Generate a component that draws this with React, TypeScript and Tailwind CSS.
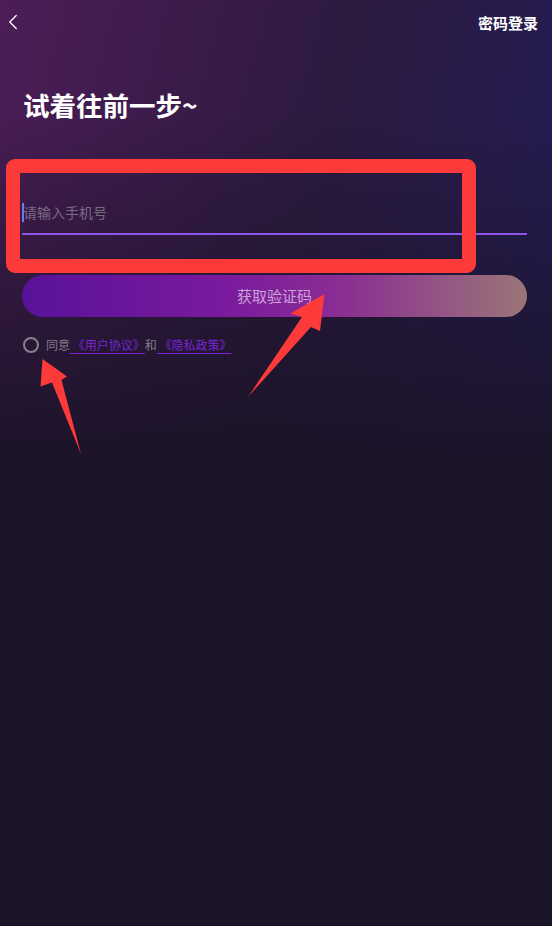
import { ChevronLeft } from "lucide-react";

const font = "font-['Noto_Sans_CJK_SC','Noto_Sans',sans-serif]";

// red markup drawn over the screenshot (box + two arrows)
function Annotations() {
  return (
    <>
      <div className="absolute left-[6px] top-[159px] w-[470px] h-[114px] border-[14px] border-[#fd3a3a] rounded-[9px] pointer-events-none" />
      <svg className="absolute left-0 top-0 pointer-events-none" width="552" height="926" viewBox="0 0 552 926">
        <polygon points="42.5,359 67,376.5 61.5,380 81,454 52,382.5 40.5,386.5" fill="#fd3a3a" />
        <polygon points="324.5,294 320,331 311,327 248,397 302,317 290.5,313.5" fill="#fd3a3a" />
      </svg>
    </>
  );
}

export default function App() {
  return (
    <div
      className={`relative w-[552px] h-[926px] overflow-hidden bg-[#1b1327] bg-[image:linear-gradient(180deg,rgba(27,19,39,0)_0px,rgba(27,19,39,0)_110px,#1b1327_470px),linear-gradient(105deg,#4c1d57_0%,#2c1a3f_45%,#231c55_80%,#221c5c_100%)] ${font}`}
    >
      {/* ── Top bar ─────────────────────────── */}
      <div className="h-[44px] flex items-center justify-between pr-[14px]">
        <ChevronLeft className="w-[26px] h-[26px] text-white" strokeWidth={1.2} />
        <span className="text-[15px] font-bold text-white leading-none">密码登录</span>
      </div>

      {/* ── Title ───────────────────────────── */}
      <h1 className="mt-[43px] pl-[23px] text-[26.5px] leading-[36px] font-bold text-white">
        试着往前一步~
      </h1>

      {/* ── Form ────────────────────────────── */}
      <div className="pl-[22px] pr-[25px] mt-[72px]">
        <div className="h-[40px] pb-[3px] flex items-center border-b-2 border-[#8f55ea]">
          <span className="w-[2px] h-[19px] bg-[#6c7cf0] -mr-[1px]" />
          <span className="text-[14px] text-[#776c83]">请输入手机号</span>
        </div>

        <button className="mt-[40px] w-[505px] h-[42px] rounded-full bg-[linear-gradient(90deg,#58129a_0%,#7a1a9e_40%,#8a2c94_62%,#9b7577_100%)] text-[15px] text-[#c8a2d8] flex items-center justify-center">
          获取验证码
        </button>

        <div className="mt-[18px] h-[20px] flex items-center">
          <span className="w-[16px] h-[16px] ml-[1px] rounded-full border-2 border-[#86808c]" />
          <span className="ml-[7px] text-[12px] text-[#857d8d] whitespace-pre">
            同意
            <span className="text-[#7a24d6] underline decoration-[#7a24d6] underline-offset-[3px]"> 《用户协议》</span>
            和
            <span className="text-[#7a24d6] underline decoration-[#7a24d6] underline-offset-[3px]"> 《隐私政策》</span>
          </span>
        </div>
      </div>

      <Annotations />
    </div>
  );
}
